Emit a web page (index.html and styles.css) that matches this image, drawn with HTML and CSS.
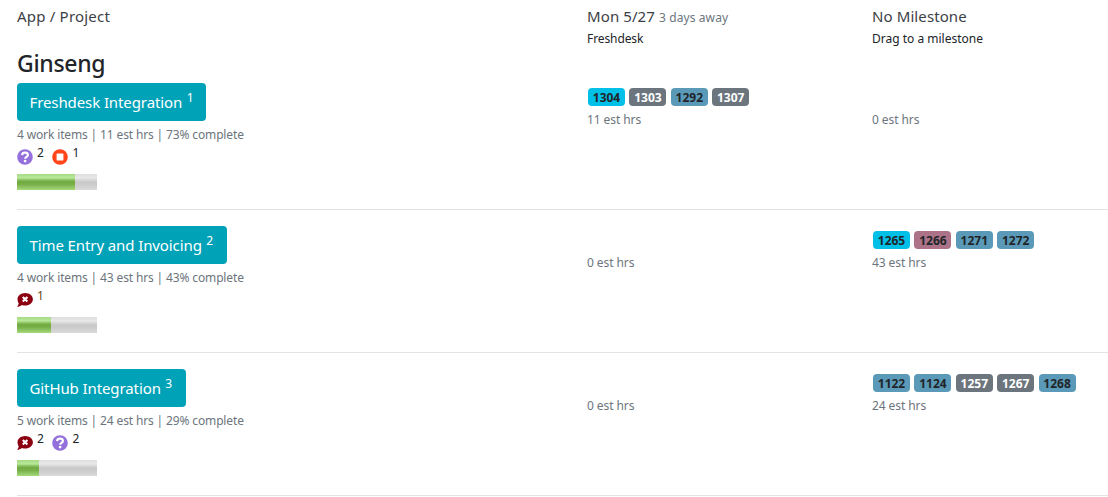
FILE: index.html
```html
<!DOCTYPE html>
<html lang="en">
<head>
<meta charset="utf-8">
<title>Milestones</title>
<link rel="stylesheet" href="styles.css">
</head>
<body>
<svg class="defs" width="0" height="0">
  <symbol id="question" viewBox="0 0 16 16"><circle cx="8" cy="8" r="7.8" fill="#9370db"/><path d="M5.1 6.1C5.2 4.4 6.5 3.7 8 3.7c1.7 0 2.9.9 2.9 2.3 0 1.8-2.7 1.9-2.7 3.7" fill="none" stroke="#fff" stroke-width="2.2"/><circle cx="8.1" cy="12.1" r="1.4" fill="#fff"/></symbol>
  <symbol id="stop" viewBox="0 0 16 16"><circle cx="8" cy="8" r="7.8" fill="#ff4519"/><rect x="4.6" y="4.6" width="6.8" height="6.8" rx=".6" fill="#fff"/></symbol>
  <symbol id="comment" viewBox="0 0 16 16"><path d="M8.2 1c4.3 0 7.7 2.8 7.7 6.3s-3.4 6.3-7.7 6.3c-1.2 0-2.3-.2-3.3-.6C3.6 14.2 1.9 14.8 0 14.8c.9-.9 1.5-2 1.7-3.2C.9 10.3.5 8.900.5 7.3.5 3.8 3.9 1 8.2 1z" fill="#8b0010"/><path d="M5.8 5l4.6 4.6m0-4.6l-4.6 4.6" fill="none" stroke="#fff" stroke-width="2.1"/></symbol>
</svg>
<main class="board">
  <header class="row head">
    <div class="title">App / Project</div>
    <div><div class="title date">Mon 5/27 <small class="away">3 days away</small></div><div class="sub">Freshdesk</div></div>
    <div><div class="title none">No Milestone</div><div class="sub drag">Drag to a milestone</div></div>
  </header>
  <h2 class="app">Ginseng</h2>

  <section class="row project first">
    <div>
      <button class="btn fresh"><span class="name">Freshdesk Integration</span><sup>1</sup></button>
      <div class="meta">4 work items | 11 est hrs | 73% complete</div>
      <div class="flags"><svg class="icon"><use href="#question"/></svg><span>2</span><svg class="icon"><use href="#stop"/></svg><span>1</span></div>
      <div class="bar"><div class="fill" style="width:73%"></div></div>
    </div>
    <div class="cell"><div class="badges"><b class="badge cyan">1304</b><b class="badge gray">1303</b><b class="badge blue">1292</b><b class="badge gray">1307</b></div><div class="hours">11 est hrs</div></div>
    <div class="cell"><div class="badges"></div><div class="hours">0 est hrs</div></div>
  </section>

  <section class="row project">
    <div>
      <button class="btn time"><span class="name">Time Entry and Invoicing</span><sup>2</sup></button>
      <div class="meta">4 work items | 43 est hrs | 43% complete</div>
      <div class="flags"><svg class="icon"><use href="#comment"/></svg><span class="warn">1</span></div>
      <div class="bar"><div class="fill" style="width:43%"></div></div>
    </div>
    <div class="cell"><div class="badges"></div><div class="hours">0 est hrs</div></div>
    <div class="cell"><div class="badges"><b class="badge cyan">1265</b><b class="badge rose">1266</b><b class="badge blue">1271</b><b class="badge blue">1272</b></div><div class="hours">43 est hrs</div></div>
  </section>

  <section class="row project">
    <div>
      <button class="btn github"><span class="name">GitHub Integration</span><sup>3</sup></button>
      <div class="meta">5 work items | 24 est hrs | 29% complete</div>
      <div class="flags"><svg class="icon"><use href="#comment"/></svg><span>2</span><svg class="icon"><use href="#question"/></svg><span>2</span></div>
      <div class="bar"><div class="fill" style="width:28%"></div></div>
    </div>
    <div class="cell"><div class="badges"></div><div class="hours">0 est hrs</div></div>
    <div class="cell"><div class="badges"><b class="badge blue">1122</b><b class="badge blue">1124</b><b class="badge gray">1257</b><b class="badge gray">1267</b><b class="badge blue">1268</b></div><div class="hours">24 est hrs</div></div>
  </section>
</main>
</body>
</html>
```
FILE: styles.css
```css
* { box-sizing: border-box; }
body {
  margin: 0;
  background: #fff;
  color: #212529;
  font-family: "Segoe UI", "Noto Sans", sans-serif;
  overflow: hidden;
}
.defs { display: block; height: 0; }
.board { padding-left: 17px; }
.row { display: grid; grid-template-columns: 570px 285px 1fr; }
.head { height: 48px; padding-top: 5px; }
.title { font-size: 15px; line-height: 23px; letter-spacing: .2px; color: #3c4146; white-space: nowrap; }
.date { letter-spacing: .1px; }
.none { letter-spacing: .1px; }
.away { font-size: 12px; letter-spacing: .1px; color: #6c757d; }
.sub { font-size: 12px; line-height: 20px; letter-spacing: -.1px; }
.drag { letter-spacing: 0; padding-top: 1px; }
.app { margin: 0; height: 35px; font-size: 23px; line-height: 30px; font-weight: 500; letter-spacing: -.3px; }
.project { height: 143px; padding-top: 16px; border-bottom: 1px solid #e3e3e4; }
.first { height: 127px; padding-top: 0; }
.btn {
  display: flex;
  align-items: center;
  gap: 4.5px;
  height: 38px;
  padding: 0 12.5px;
  border: 0;
  border-radius: 4px;
  background: #00a2b8;
  color: #fff;
  font: 15px/24px "Segoe UI", "Noto Sans", sans-serif;
  white-space: nowrap;
}
.name { letter-spacing: -.1px; }
.btn sup { font-size: 12px; line-height: 12px; margin-top: -9px; }
.fresh { width: 189px; }
.time { width: 210px; }
.github { width: 169px; }
.meta, .hours { font-size: 12px; line-height: 20px; color: #6c757d; white-space: nowrap; }
.meta { margin-top: 4px; letter-spacing: -.14px; }
.hours { letter-spacing: -.08px; }
.flags { display: flex; height: 16px; margin-top: 4px; }
.flags span { width: 7px; margin: -3px 8px 0 4.5px; font-size: 12px; line-height: 14px; }
.flags .warn { color: #6b4a1c; }
.icon { width: 16px; height: 16px; margin-left: -.5px; }
.icon + span + .icon { margin-left: 0; }
.bar {
  width: 80px;
  height: 16px;
  margin-top: 9px;
  background: linear-gradient(#dedede 0, #e8e8e8 25%, #dadada 35%, #c9c9c9 50%, #cbcbcb 65%, #dadada 100%);
}
.fill { height: 100%; background: linear-gradient(#a5db83 0, #b9e99b 25%, #8fc668 35%, #70aa40 48%, #78b04a 65%, #a5da7c 100%); }
.badges { display: flex; gap: 4.4px; height: 18px; margin: 5px 0 4px 1px; }
.badge { width: 37px; height: 18px; border-radius: 4px; font-size: 12px; line-height: 19px; text-align: center; }
.cyan { background: #00c0e8; }
.gray { background: #6c757d; color: #fff; }
.blue { background: #5a9ab8; }
.rose { background: #ac7288; }
```
